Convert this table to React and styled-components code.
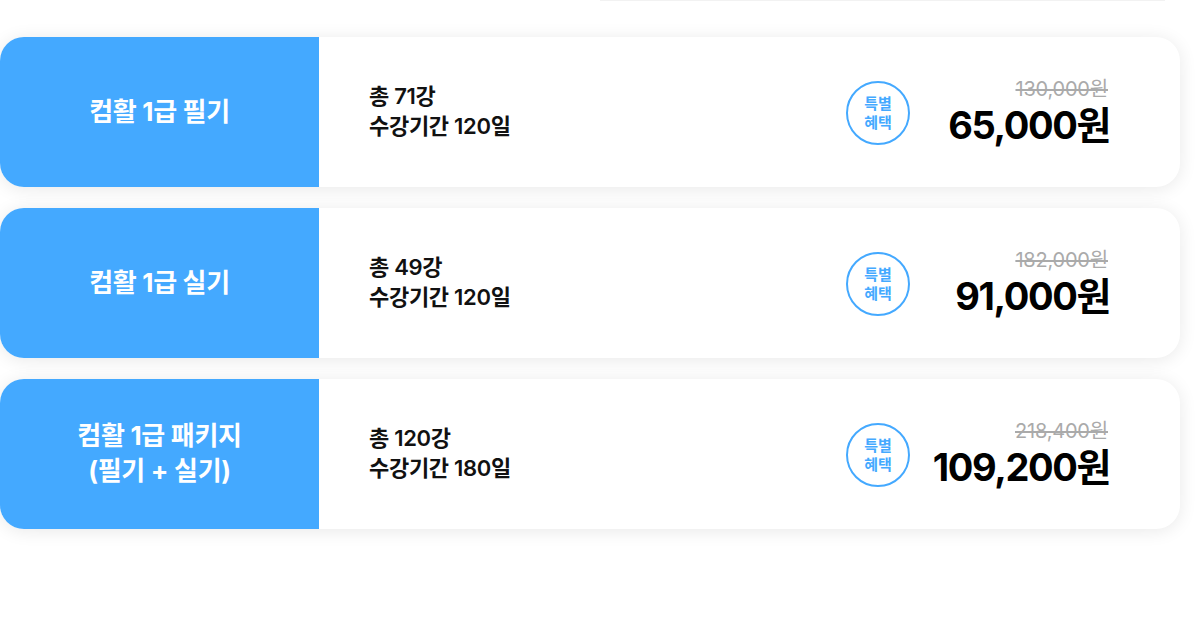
import React from "react";
import styled, { createGlobalStyle } from "styled-components";

const GlobalStyle = createGlobalStyle`
  html, body {
    margin: 0;
    padding: 0;
    background: #fff;
    font-family: Inter, "Noto Sans CJK KR", "Noto Sans", sans-serif;
    color: #111;
  }
`;

const courses = [
  { title: ["컴활 1급 필기"], lectures: "총 71강", period: "수강기간 120일", original: "130,000원", price: "65,000원" },
  { title: ["컴활 1급 실기"], lectures: "총 49강", period: "수강기간 120일", original: "182,000원", price: "91,000원" },
  { title: ["컴활 1급 패키지", "(필기 + 실기)"], lectures: "총 120강", period: "수강기간 180일", original: "218,400원", price: "109,200원" },
];

const Page = styled.div`
  width: 1200px;
  height: 629px;
  overflow: hidden;
`;

const TopLine = styled.div`
  height: 1px;
  margin-left: 600px;
  width: 565px;
  background: #f2f2f2;
`;

const List = styled.div`
  display: flex;
  flex-direction: column;
  gap: 21px;
  padding-top: 36px;
  width: 1180px;
`;

const Card = styled.div`
  display: flex;
  height: 150px;
  border-radius: 24px;
  background: #fff;
  box-shadow: 0 2px 18px rgba(0, 0, 0, 0.09);
  overflow: hidden;
`;

const Title = styled.div`
  width: 319px;
  flex-shrink: 0;
  background: #44a9ff;
  color: #fff;
  display: flex;
  flex-direction: column;
  align-items: center;
  justify-content: center;
  font-size: 26px;
  font-weight: 700;
  line-height: 35px;
  letter-spacing: -0.3px;
  padding-bottom: 2px;
`;

const Body = styled.div`
  flex: 1;
  display: flex;
  align-items: center;
  padding: 0 70px 0 50px;
`;

const Info = styled.div`
  flex: 1;
  font-size: 22px;
  font-weight: 600;
  line-height: 30px;
  letter-spacing: -0.3px;
  color: #111;
  padding-bottom: 2px;
`;

const Badge = styled.div`
  width: 60px;
  height: 60px;
  border: 2px solid #44a9ff;
  border-radius: 50%;
  display: flex;
  flex-direction: column;
  align-items: center;
  justify-content: center;
  color: #44a9ff;
  font-size: 15px;
  font-weight: 700;
  line-height: 19px;
  margin-top: 2px;
`;

const Prices = styled.div`
  width: 200px;
  display: flex;
  flex-direction: column;
  align-items: flex-end;
  gap: 4px;
`;

const Original = styled.span`
  font-size: 20px;
  color: #aaa;
  text-decoration: line-through;
  line-height: 22px;
  letter-spacing: -0.2px;
  margin-right: 2px;
`;

const Price = styled.span`
  font-size: 38px;
  font-weight: 700;
  color: #000;
  line-height: 42px;
  letter-spacing: -1.4px;
`;

export default function App() {
  return (
    <Page>
      <GlobalStyle />
      <TopLine />
      <List>
        {courses.map((c) => (
          <Card key={c.price}>
            <Title>
              {c.title.map((t) => (
                <span key={t}>{t}</span>
              ))}
            </Title>
            <Body>
              <Info>
                <div>{c.lectures}</div>
                <div>{c.period}</div>
              </Info>
              <Badge>
                <span>특별</span>
                <span>혜택</span>
              </Badge>
              <Prices>
                <Original>{c.original}</Original>
                <Price>{c.price}</Price>
              </Prices>
            </Body>
          </Card>
        ))}
      </List>
    </Page>
  );
}
